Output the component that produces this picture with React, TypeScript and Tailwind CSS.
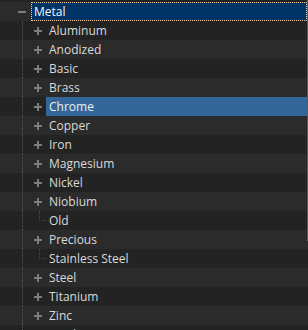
import React from "react";

const font = { fontFamily: '"Open Sans", "Noto Sans", sans-serif' };

function Plus() {
  return (
    <svg width="8" height="8" viewBox="0 0 8 8" className="shrink-0">
      <rect x="0" y="3" width="8" height="2" fill="#7e7e7e" />
      <rect x="3" y="0" width="2" height="8" fill="#7e7e7e" />
    </svg>
  );
}

function Minus() {
  return (
    <svg width="8" height="8" viewBox="0 0 8 8" className="shrink-0">
      <rect x="0" y="3" width="8" height="2" fill="#7e7e7e" />
    </svg>
  );
}

type Item = { name: string; leaf?: boolean; hover?: boolean };

const children: Item[] = [
  { name: "Aluminum" },
  { name: "Anodized" },
  { name: "Basic" },
  { name: "Brass" },
  { name: "Chrome", hover: true },
  { name: "Copper" },
  { name: "Iron" },
  { name: "Magnesium" },
  { name: "Nickel" },
  { name: "Niobium" },
  { name: "Old", leaf: true },
  { name: "Precious" },
  { name: "Stainless Steel", leaf: true },
  { name: "Steel" },
  { name: "Titanium" },
  { name: "Zinc" },
  { name: "Leather" },
];

function ChildRow({ item, index }: { item: Item; index: number }) {
  const bg = index % 2 === 0 ? "bg-[#2b2b2b]" : "bg-[#232323]";
  return (
    <div className={`flex h-[19px] shrink-0 items-stretch ${bg}`}>
      <div className="w-[22px] shrink-0" />
      <div className="w-px shrink-0 border-l border-dotted border-[#555555]" />
      <div className="flex w-[23px] shrink-0 items-center">
        {item.leaf ? (
          <div className="ml-[16px] h-[10px] w-[7px] self-start border-b border-l border-dotted border-[#4a4a4a]" />
        ) : (
          <div className="ml-[11px] flex">
            <Plus />
          </div>
        )}
      </div>
      <div
        className={`flex items-center px-[3px] text-[12px] leading-[19px] ${
          item.hover ? "mr-[1px] flex-1 bg-[#336699] text-[#f0f0f0]" : "text-[#dadada]"
        }`}
      >
        {item.name}
      </div>
    </div>
  );
}

export default function App() {
  return (
    <div
      className="relative h-[330px] w-[308px] overflow-hidden bg-[#232323]"
      style={font}
    >
      <div className="flex flex-col pt-[2px]">
        <div className="flex h-[19px] shrink-0 items-center bg-[#2b2b2b]">
          <div className="w-[18px] shrink-0" />
          <Minus />
          <div className="w-[5px] shrink-0" />
          <div className="mr-[1px] flex h-full flex-1 items-center border border-dotted border-[#f3d2a2] bg-[#003366] pl-[2px] text-[12px] leading-[17px] text-[#f2f6ff]">
            Metal
          </div>
        </div>
        {children.map((c, i) => (
          <ChildRow key={c.name} item={c} index={i + 1} />
        ))}
      </div>
      <div className="absolute right-0 top-0 h-[241px] w-px bg-[#5a5a5a]" />
    </div>
  );
}
